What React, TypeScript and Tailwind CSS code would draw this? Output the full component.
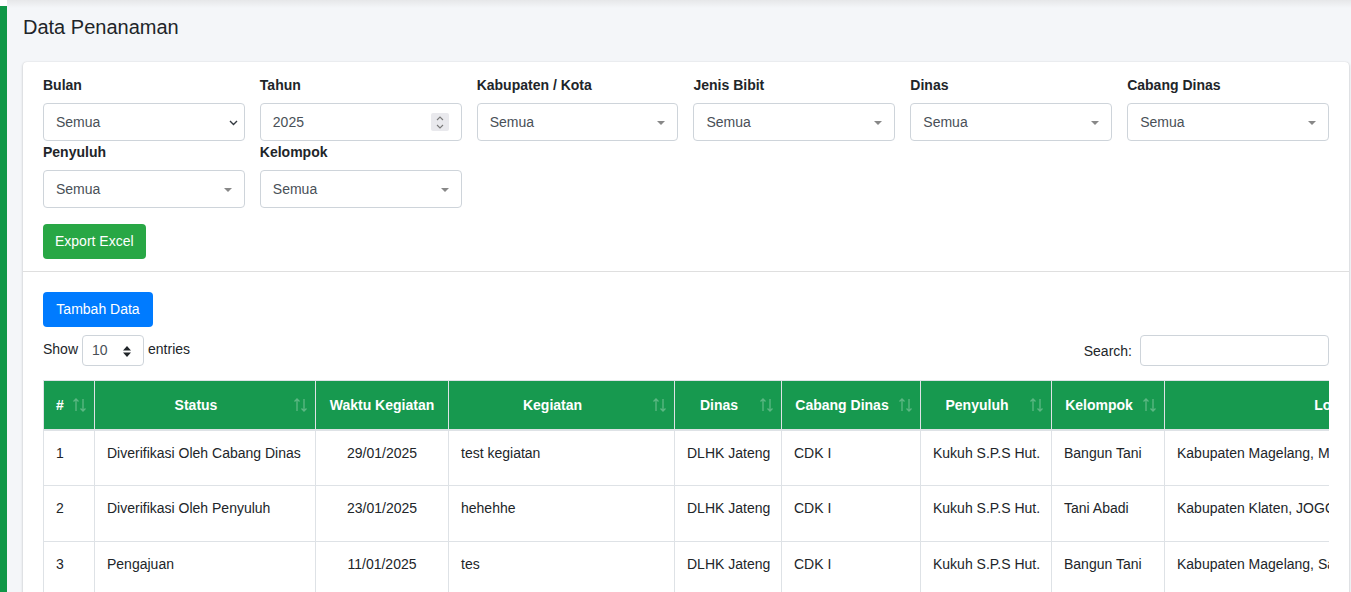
const font = { fontFamily: '"Liberation Sans", Arial, sans-serif' };

const SortIcon = () => (
    <svg className="absolute right-[6px] top-1/2 -translate-y-1/2 text-white/30" width="16" height="16" viewBox="0 0 16 16" fill="none" stroke="currentColor" strokeWidth="1.3">
        <path d="M4 14V2M1.5 4.5L4 2l2.5 2.5" />
        <path d="M11 2v12M8.5 11.5L11 14l2.5-2.5" />
    </svg>
);

const NativeSelect = ({ value }: { value: string }) => (
    <div className="relative flex h-[38px] items-center rounded-[4px] border border-[#ced4da] bg-white pl-[12px] text-[14px] text-[#495057]">
        {value}
        <svg className="absolute right-[6px] top-[16px]" width="9" height="6" viewBox="0 0 9 6" fill="none" stroke="#343a40" strokeWidth="1.4">
            <path d="M1 1l3.5 3.5L8 1" />
        </svg>
    </div>
);

const Select2 = ({ value }: { value: string }) => (
    <div className="relative flex h-[38px] items-center rounded-[4px] border border-[#ced4da] bg-white pl-[12px] text-[14px] text-[#495057]">
        {value}
        <svg className="absolute right-[12px] top-[17px]" width="8" height="4" viewBox="0 0 8 4">
            <path d="M0 0h8L4 4z" fill="#888" />
        </svg>
    </div>
);

const NumberInput = ({ value }: { value: string }) => (
    <div className="relative flex h-[38px] items-center rounded-[4px] border border-[#ced4da] bg-white pl-[12px] text-[14px] text-[#495057]">
        {value}
        <div className="absolute right-[12px] top-[9px] flex h-[18px] w-[18px] flex-col items-center justify-center gap-[3px] rounded-[2px] bg-[#e9e9ed]">
            <svg width="8" height="5" viewBox="0 0 8 5" fill="none" stroke="#7a7a7a" strokeWidth="1.1">
                <path d="M1 4l3-3 3 3" />
            </svg>
            <svg width="8" height="5" viewBox="0 0 8 5" fill="none" stroke="#7a7a7a" strokeWidth="1.1">
                <path d="M1 1l3 3 3-3" />
            </svg>
        </div>
    </div>
);

const Field = ({ label, children }: { label: string; children: React.ReactNode }) => (
    <div>
        <div className="mb-[7px] text-[14px] font-bold leading-[21px] text-[#212529]">{label}</div>
        {children}
    </div>
);

const columns = [
    { label: "#", w: "w-[51px]", sort: true },
    { label: "Status", w: "w-[221px]", sort: true },
    { label: "Waktu Kegiatan", w: "w-[133px]", sort: false },
    { label: "Kegiatan", w: "w-[226px]", sort: true },
    { label: "Dinas", w: "w-[107px]", sort: true },
    { label: "Cabang Dinas", w: "w-[139px]", sort: true },
    { label: "Penyuluh", w: "w-[131px]", sort: true },
    { label: "Kelompok", w: "w-[113px]", sort: true },
    { label: "Lokasi", w: "w-[362px]", sort: true },
];

const rows = [
    ["1", "Diverifikasi Oleh Cabang Dinas", "29/01/2025", "test kegiatan", "DLHK Jateng", "CDK I", "Kukuh S.P.S Hut.", "Bangun Tani", "Kabupaten Magelang, Mertoyudan"],
    ["2", "Diverifikasi Oleh Penyuluh", "23/01/2025", "hehehhe", "DLHK Jateng", "CDK I", "Kukuh S.P.S Hut.", "Tani Abadi", "Kabupaten Klaten, JOGONALAN"],
    ["3", "Pengajuan", "11/01/2025", "tes", "DLHK Jateng", "CDK I", "Kukuh S.P.S Hut.", "Bangun Tani", "Kabupaten Magelang, Salaman"],
    ["4", "Pengajuan", "08/01/2025", "tanam bibit", "DLHK Jateng", "CDK I", "Kukuh S.P.S Hut.", "Tani Abadi", "Kabupaten Klaten, Wedi"],
];

const App = () => {
    return (
        <div className="flex min-h-screen bg-[#f4f6f9] text-[#212529]" style={font}>
            <div className="flex w-[7px] shrink-0 flex-col">
                <div className="h-[6px] bg-white" />
                <div className="flex-1 bg-[#0f9747]" />
            </div>

            <div className="min-w-0 flex-1">
                <div className="h-[8px] bg-gradient-to-b from-[#e6e7e9] to-[#f4f6f9]" />
                <div className="pl-[16px] pr-[2px]">
                    <h1 className="mt-[7px] mb-[23px] text-[20px] leading-[24px] text-[#212529]">Data Penanaman</h1>

                    <div className="rounded-[4px] bg-white shadow-[0_0_1px_rgba(0,0,0,0.125),0_1px_3px_rgba(0,0,0,0.2)]">
                        <div className="border-b border-[#dfdfdf] px-[20px] pt-[13px] pb-[12px]">
                            <div className="grid grid-cols-6 gap-x-[15px] gap-y-[1px]">
                                <Field label="Bulan"><NativeSelect value="Semua" /></Field>
                                <Field label="Tahun"><NumberInput value="2025" /></Field>
                                <Field label="Kabupaten / Kota"><Select2 value="Semua" /></Field>
                                <Field label="Jenis Bibit"><Select2 value="Semua" /></Field>
                                <Field label="Dinas"><Select2 value="Semua" /></Field>
                                <Field label="Cabang Dinas"><Select2 value="Semua" /></Field>
                                <Field label="Penyuluh"><Select2 value="Semua" /></Field>
                                <Field label="Kelompok"><Select2 value="Semua" /></Field>
                            </div>
                            <button className="mt-[16px] h-[35px] rounded-[4px] bg-[#28a745] px-[12px] text-[14px] text-white">Export Excel</button>
                        </div>

                        <div className="px-[20px] pt-[20px] pb-[20px]">
                            <button className="h-[35px] w-[110px] rounded-[4px] bg-[#007bff] text-[14px] text-white">Tambah Data</button>

                            <div className="mt-[8px] flex items-center justify-between text-[14px]">
                                <div className="flex items-center">
                                    <span className="-mt-[2px]">Show</span>
                                    <div className="relative mx-[4px] flex h-[31px] w-[62px] items-center rounded-[4px] border border-[#ced4da] pl-[9px] text-[#495057]">
                                        10
                                        <svg className="absolute left-[40px] top-[10px]" width="8" height="11" viewBox="0 0 8 11">
                                            <path d="M0 4.5L4 0l4 4.5zM0 6.5h8L4 11z" fill="#212529" />
                                        </svg>
                                    </div>
                                    <span className="-mt-[2px]">entries</span>
                                </div>
                                <div className="flex items-center">
                                    <span className="mt-[2px]">Search:</span>
                                    <div className="ml-[8px] h-[31px] w-[189px] rounded-[4px] border border-[#ced4da]" />
                                </div>
                            </div>

                            <div className="mt-[14px] overflow-hidden">
                                <table className="w-[1483px] table-fixed border-collapse text-[14px]">
                                    <thead>
                                        <tr>
                                            {columns.map((c) => (
                                                <th
                                                    key={c.label}
                                                    className={`${c.w} relative h-[49px] border border-b-2 border-[#dee2e6] bg-[#17994f] pl-[12px] pt-[2px] text-center font-bold leading-[21px] text-white whitespace-nowrap ${c.sort ? "pr-[30px]" : "pr-[12px]"}`}
                                                >
                                                    {c.label}
                                                    {c.sort && <SortIcon />}
                                                </th>
                                            ))}
                                        </tr>
                                    </thead>
                                    <tbody>
                                        {rows.map((r) => (
                                            <tr key={r[0]} className="h-[56px]">
                                                {r.map((cell, i) => (
                                                    <td
                                                        key={i}
                                                        className={`border border-[#dee2e6] px-[12px] pt-[12px] align-top leading-[21px] whitespace-nowrap ${i === 2 ? "text-center" : ""}`}
                                                    >
                                                        {cell}
                                                    </td>
                                                ))}
                                            </tr>
                                        ))}
                                    </tbody>
                                </table>
                            </div>
                        </div>
                    </div>
                </div>
            </div>
        </div>
    );
};

export default App;
